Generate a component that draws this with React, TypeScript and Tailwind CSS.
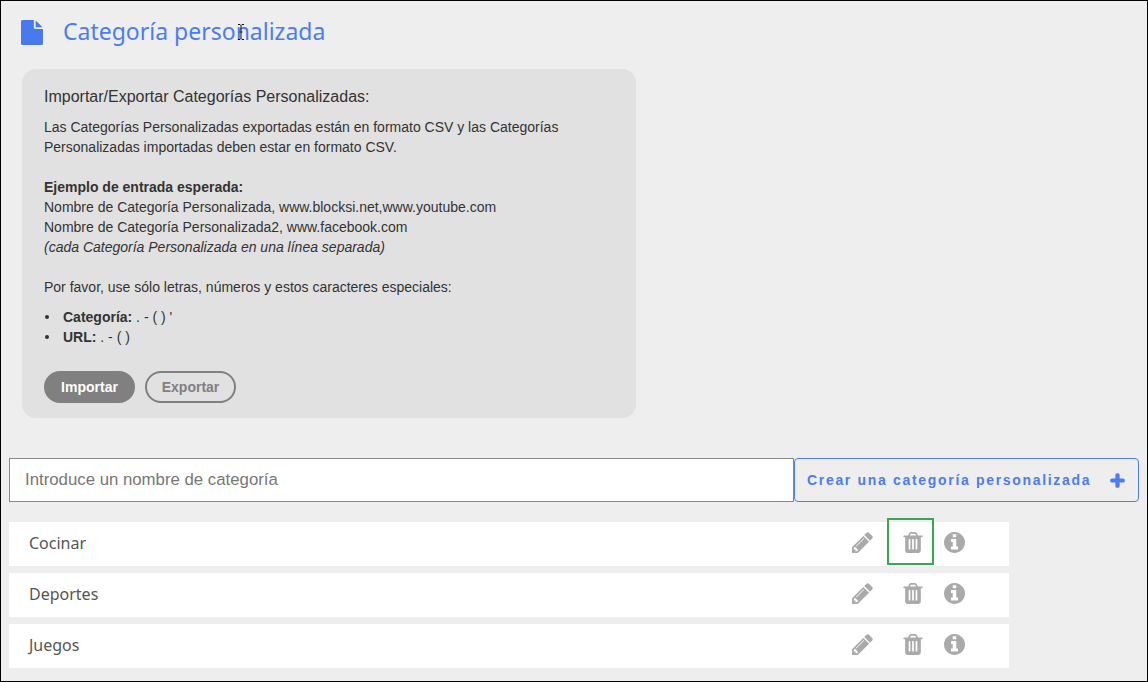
import { FaPlus } from "react-icons/fa";

// font-awesome 4 shapes, the ones the page uses
function FileIcon() {
  return (
    <svg width="22" height="25" viewBox="128 0 1536 1792" preserveAspectRatio="none" fill="#4979f0">
      <path d="M1152 512v-472q22 14 36 28l408 408q14 14 28 36h-472zm-128 32q0 40 28 68t68 28h544v1056q0 40-28 68t-68 28h-1344q-40 0-68-28t-28-68v-1600q0-40 28-68t68-28h800v544z" />
    </svg>
  );
}

function PencilIcon() {
  return (
    <svg width="21" height="21" viewBox="128 128 1536 1536" fill="#aaaaaa">
      <path d="M491 1536l91-91-235-235-91 91v107h128v128h107zm523-928q0-22-22-22-10 0-17 7l-542 542q-7 7-7 17 0 22 22 22 10 0 17-7l542-542q7-7 7-17zm-54-192l416 416-832 832H128v-416zm683 96q0 53-37 90l-166 166-416-416 166-165q36-38 90-38 53 0 91 38l235 234q37 39 37 91z" />
    </svg>
  );
}

function TrashIcon() {
  return (
    <svg width="20" height="21" viewBox="160 128 1472 1536" fill="#aaaaaa">
      <path d="M704 1376v-704q0-14-9-23t-23-9h-64q-14 0-23 9t-9 23v704q0 14 9 23t23 9h64q14 0 23-9t9-23zm256 0v-704q0-14-9-23t-23-9h-64q-14 0-23 9t-9 23v704q0 14 9 23t23 9h64q14 0 23-9t9-23zm256 0v-704q0-14-9-23t-23-9h-64q-14 0-23 9t-9 23v704q0 14 9 23t23 9h64q14 0 23-9t9-23zm-544-992h448l-48-117q-7-9-17-11h-317q-10 2-17 11zm928 32v64q0 14-9 23t-23 9h-96v948q0 83-47 143.500t-113 60.500h-832q-66 0-113-58.500t-47-141.500v-952h-96q-14 0-23-9t-9-23v-64q0-14 9-23t23-9h309l70-167q15-37 54-63t79-26h320q40 0 79 26t54 63l70 167h309q14 0 23 9t9 23z" />
    </svg>
  );
}

function InfoIcon() {
  return (
    <svg width="21" height="21" viewBox="128 128 1536 1536" fill="#aaaaaa">
      <path d="M1152 1376v-160q0-14-9-23t-23-9h-96v-512q0-14-9-23t-23-9h-320q-14 0-23 9t-9 23v160q0 14 9 23t23 9h96v320h-96q-14 0-23 9t-9 23v160q0 14 9 23t23 9h448q14 0 23-9t9-23zm-128-896v-160q0-14-9-23t-23-9h-192q-14 0-23 9t-9 23v160q0 14 9 23t23 9h192q14 0 23-9t9-23zm640 416q0 209-103 385.500t-279.500 279.500-385.500 103-385.500-103-279.500-279.500-103-385.500 103-385.500 279.500-279.500 385.500-103 385.500 103 279.500 279.500 103 385.500z" />
    </svg>
  );
}

function CategoryRow({ name, boxed }: { name: string; boxed?: boolean }) {
  return (
    <div className="flex h-[44px] w-[1000px] items-center bg-white pb-[2px] pl-5">
      <span className="flex-1 font-['Noto_Sans',sans-serif] text-base text-[#555]">{name}</span>
      <div className="flex items-center gap-[30px] pr-[44px] pb-[1px]">
        <PencilIcon />
        <div className="relative flex items-center gap-[21px]">
          <TrashIcon />
          {boxed && (
            <div className="absolute -top-[14px] -left-[16px] h-[47px] w-[47px] border-2 border-[#34a853]" />
          )}
          <InfoIcon />
        </div>
      </div>
    </div>
  );
}

function Bullet({ children }: { children: React.ReactNode }) {
  return (
    <li className="flex items-center">
      <span className="mr-[14px] h-[4px] w-[4px] rounded-full bg-[#333]" />
      <span>{children}</span>
    </li>
  );
}

export default function App() {
  return (
    <div className="h-[682px] w-[1148px] overflow-hidden border border-black bg-[#eeeeee] font-['Liberation_Sans',Arial,sans-serif]">
      <div className="relative flex items-center pt-[18px] pl-5">
        <FileIcon />
        <h1 className="ml-5 -translate-y-px font-['Noto_Sans',sans-serif] text-[23px] leading-[26px] text-[#4c7cf3]">
          Categoría personalizada
        </h1>
        {/* mouse pointer caught in the screenshot */}
        <svg className="absolute top-[23px] left-[236px]" width="8" height="16" viewBox="0 0 8 16" fill="none">
          <path d="M1 .5h2l1 1 1-1h2M4 1.500v13M1 15.500h2l1-1 1 1h2M2.500 8h3" stroke="#111" strokeWidth="1" />
        </svg>
      </div>

      <div className="mt-[24px] ml-[21px] h-[349px] w-[614px] rounded-[14px] bg-[#e1e1e1] px-[22px] pt-[19px] text-sm leading-5 text-[#333]">
        <h2 className="text-base leading-[18px]">Importar/Exportar Categorías Personalizadas:</h2>
        <p className="mt-[11px]">
          Las Categorías Personalizadas exportadas están en formato CSV y las Categorías
          <br />
          Personalizadas importadas deben estar en formato CSV.
        </p>
        <p className="mt-5">
          <b>Ejemplo de entrada esperada:</b>
          <br />
          Nombre de Categoría Personalizada, www.blocksi.net,www.youtube.com
          <br />
          Nombre de Categoría Personalizada2, www.facebook.com
          <br />
          <i>(cada Categoría Personalizada en una línea separada)</i>
        </p>
        <p className="mt-5">Por favor, use sólo letras, números y estos caracteres especiales:</p>
        <ul className="mt-[10px] pl-[1px]">
          <Bullet>
            <b>Categoría:</b> . - ( ) '
          </Bullet>
          <Bullet>
            <b>URL:</b> . - ( )
          </Bullet>
        </ul>
        <div className="mt-[24px] flex gap-[10px]">
          <button className="h-8 w-[91px] rounded-full bg-[#808080] text-sm font-bold text-white">
            Importar
          </button>
          <button className="h-8 w-[91px] rounded-full border-2 border-[#808080] text-sm font-bold text-[#808080]">
            Exportar
          </button>
        </div>
      </div>

      <div className="mt-10 ml-2 flex h-[44px]">
        <input
          readOnly
          placeholder="Introduce un nombre de categoría"
          className="h-full w-[785px] border border-[#8a8a8a] bg-white px-[15px] text-[16.8px] text-[#777] outline-none placeholder:text-[#777]"
        />
        <button className="flex h-full w-[345px] items-center justify-between rounded-[4px] border border-[#4c7cf3] pr-[13px] pl-3 text-sm font-bold tracking-[1.68px] text-[#4c7cf3]">
          Crear una categoría personalizada
          <FaPlus className="h-[15px] w-[15px] stroke-current stroke-[48]" />
        </button>
      </div>

      <div className="mt-5 ml-2 flex flex-col gap-[7px]">
        <CategoryRow name="Cocinar" boxed />
        <CategoryRow name="Deportes" />
        <CategoryRow name="Juegos" />
      </div>
    </div>
  );
}
